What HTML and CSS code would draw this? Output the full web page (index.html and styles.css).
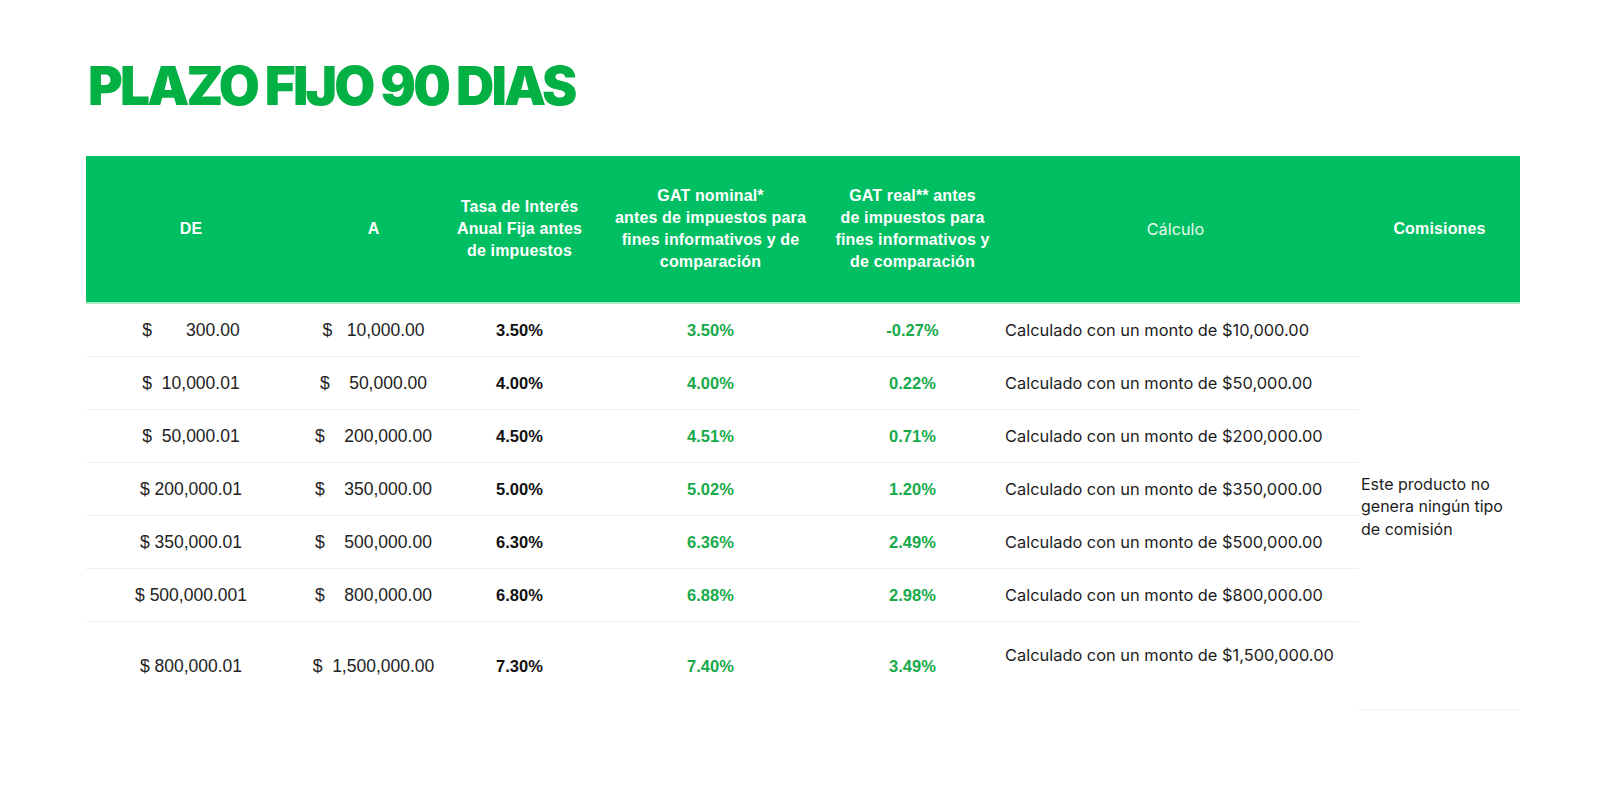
FILE: index.html
```html
<!DOCTYPE html>
<html lang="es">
<head>
<meta charset="utf-8">
<title>Plazo fijo 90 días</title>
<link rel="stylesheet" href="styles.css">
</head>
<body>
<main class="page">
  <h1 class="title">PLAZO FIJO 90 DIAS</h1>
  <div class="rates">
    <div class="hd bold">DE</div>
    <div class="hd bold">A</div>
    <div class="hd bold">Tasa de Interés<br>Anual Fija antes<br>de impuestos</div>
    <div class="hd bold">GAT nominal*<br>antes de impuestos para<br>fines informativos y de<br>comparación</div>
    <div class="hd bold">GAT real** antes<br>de impuestos para<br>fines informativos y<br>de comparación</div>
    <div class="hd calc-hd">Cálculo</div>
    <div class="hd bold">Comisiones</div>

    <div class="c money">$       300.00</div>
    <div class="c money">$   10,000.00</div>
    <div class="c pct">3.50%</div>
    <div class="c pct green">3.50%</div>
    <div class="c pct green">-0.27%</div>
    <div class="c calc">Calculado con un monto de $10,000.00</div>
    <div class="com">Este producto no genera ningún tipo de comisión</div>

    <div class="c money">$  10,000.01</div>
    <div class="c money">$    50,000.00</div>
    <div class="c pct">4.00%</div>
    <div class="c pct green">4.00%</div>
    <div class="c pct green">0.22%</div>
    <div class="c calc">Calculado con un monto de $50,000.00</div>

    <div class="c money">$  50,000.01</div>
    <div class="c money">$    200,000.00</div>
    <div class="c pct">4.50%</div>
    <div class="c pct green">4.51%</div>
    <div class="c pct green">0.71%</div>
    <div class="c calc">Calculado con un monto de $200,000.00</div>

    <div class="c money">$ 200,000.01</div>
    <div class="c money">$    350,000.00</div>
    <div class="c pct">5.00%</div>
    <div class="c pct green">5.02%</div>
    <div class="c pct green">1.20%</div>
    <div class="c calc">Calculado con un monto de $350,000.00</div>

    <div class="c money">$ 350,000.01</div>
    <div class="c money">$    500,000.00</div>
    <div class="c pct">6.30%</div>
    <div class="c pct green">6.36%</div>
    <div class="c pct green">2.49%</div>
    <div class="c calc">Calculado con un monto de $500,000.00</div>

    <div class="c money">$ 500,000.001</div>
    <div class="c money">$    800,000.00</div>
    <div class="c pct">6.80%</div>
    <div class="c pct green">6.88%</div>
    <div class="c pct green">2.98%</div>
    <div class="c calc">Calculado con un monto de $800,000.00</div>

    <div class="c money last">$ 800,000.01</div>
    <div class="c money last">$  1,500,000.00</div>
    <div class="c pct last">7.30%</div>
    <div class="c pct green last">7.40%</div>
    <div class="c pct green last">3.49%</div>
    <div class="c calc last calc-top">Calculado con un monto de $1,500,000.00</div>
  </div>
</main>
</body>
</html>
```
FILE: styles.css
```css
* { box-sizing: border-box; }
html, body { margin: 0; padding: 0; background: #ffffff; }
body { font-family: "Liberation Sans", Arial, sans-serif; color: #111111; }

.page { padding: 53px 0 0 86px; }

.title {
  margin: 0 0 0 2px;
  font-family: Inter, "Liberation Sans", sans-serif;
  font-weight: 900;
  font-size: 53px;
  line-height: 66px;
  letter-spacing: -2.8px;
  color: #03b043;
}

.rates {
  margin-top: 37px;
  display: grid;
  grid-template-columns: 210px 155px 137px 245px 159px 367px 161px;
  grid-template-rows: 148px repeat(6, 53px) 88px;
  width: 1434px;
}

.hd {
  background: #00bf63;
  color: #ffffff;
  display: flex;
  align-items: center;
  justify-content: center;
  text-align: center;
  font-size: 16px;
  line-height: 22.2px;
  letter-spacing: 0.15px;
  white-space: nowrap;
  border-bottom: 2px solid #a6ecc6;
}
.bold { font-weight: 700; }
.calc-hd {
  font-family: Inter, "Liberation Sans", sans-serif;
  font-weight: 400;
  font-size: 16.3px;
  letter-spacing: 0;
  color: #e6fbee;
}

.c {
  display: flex;
  align-items: center;
  justify-content: center;
  border-bottom: 1px solid #eeeeee;
  white-space: pre;
}
.c.last { border-bottom: none; }

.money { font-size: 17.5px; color: #222222; }
.pct { font-weight: 700; font-size: 16.5px; color: #111111; }
.pct.green { color: #17aa4b; }

.calc {
  justify-content: flex-start;
  padding-left: 13px;
  font-family: Inter, "Liberation Sans", sans-serif;
  font-size: 16.4px;
  color: #1c1c1c;
}
.calc-top { padding-bottom: 22px; }

.com {
  grid-column: 7;
  grid-row: 2 / 9;
  display: flex;
  align-items: center;
  padding: 0 10px 0 2px;
  font-family: Inter, "Liberation Sans", sans-serif;
  font-size: 16px;
  line-height: 22.4px;
  color: #1c1c1c;
  border-bottom: 1px solid #f1f1f1;
}
```
